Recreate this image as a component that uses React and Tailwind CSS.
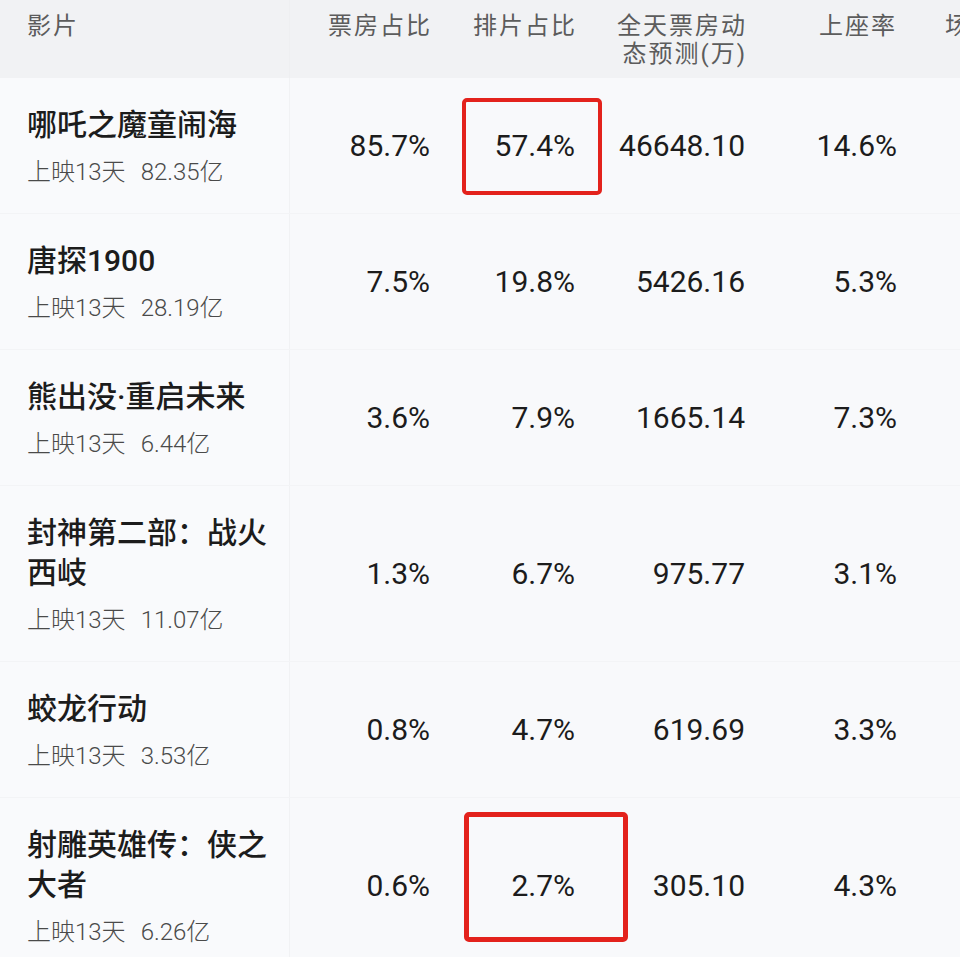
import React from 'react';

const films = [
    { name: '哪吒之魔童闹海', days: '上映13天', total: '82.35亿', box: '85.7%', show: '57.4%', pred: '46648.10', seat: '14.6%' },
    { name: '唐探1900', days: '上映13天', total: '28.19亿', box: '7.5%', show: '19.8%', pred: '5426.16', seat: '5.3%' },
    { name: '熊出没·重启未来', days: '上映13天', total: '6.44亿', box: '3.6%', show: '7.9%', pred: '1665.14', seat: '7.3%' },
    { name: '封神第二部：战火西岐', days: '上映13天', total: '11.07亿', box: '1.3%', show: '6.7%', pred: '975.77', seat: '3.1%' },
    { name: '蛟龙行动', days: '上映13天', total: '3.53亿', box: '0.8%', show: '4.7%', pred: '619.69', seat: '3.3%' },
    { name: '射雕英雄传：侠之大者', days: '上映13天', total: '6.26亿', box: '0.6%', show: '2.7%', pred: '305.10', seat: '4.3%' },
];

const grid = 'grid grid-cols-[290px_150px_145px_170px_150px_1fr]';

export default function App() {
    return (
        <div
            className="relative w-[960px] h-[957px] overflow-hidden bg-[#f8f9fb]"
            style={{ fontFamily: 'Roboto, "Noto Sans CJK SC", sans-serif' }}
        >
            {/* header */}
            <div className={`${grid} h-[78px] bg-[#f1f2f4] text-[24px] leading-[28px] tracking-[2px] text-[#5c5c5c]`}>
                <div className="pl-[27px] pt-[12px] border-r border-[#eeeff1]">影片</div>
                <div className="pr-[8px] pt-[12px] text-right">票房占比</div>
                <div className="pr-[8px] pt-[12px] text-right">排片占比</div>
                <div className="pr-[8px] pt-[12px] text-right">全天票房动<br />态预测(万)</div>
                <div className="pr-[8px] pt-[12px] text-right">上座率</div>
                <div className="pl-[40px] pt-[12px] whitespace-nowrap">场均</div>
            </div>

            {films.map((f) => (
                <div key={f.name} className={`${grid} border-b border-[#f3f4f6] text-[#1c1c1c]`}>
                    <div className="pl-[27px] pr-[13px] pt-[27px] pb-[24px] border-r border-[#f1f2f4] bg-[#f9fafc]">
                        <div className="text-[30px] leading-[40px] font-medium">{f.name}</div>
                        <div className="mt-[10px] text-[24px] leading-[34px] font-light text-[#4a4a4a]">
                            {f.days}
                            <span className="ml-[15px]">{f.total}</span>
                        </div>
                    </div>
                    <div className="flex items-center justify-end pr-[10px] text-[30px]">{f.box}</div>
                    <div className="flex items-center justify-end pr-[10px] text-[30px]">{f.show}</div>
                    <div className="flex items-center justify-end pr-[10px] text-[30px]">{f.pred}</div>
                    <div className="flex items-center justify-end pr-[8px] text-[30px]">{f.seat}</div>
                    <div />
                </div>
            ))}

            {/* red annotation boxes */}
            <div className="absolute left-[462px] top-[98px] w-[140px] h-[97px] border-[4px] border-[#e3221c] rounded-[5px]" />
            <div className="absolute left-[464px] top-[812px] w-[164px] h-[130px] border-[5px] border-[#e3221c] rounded-[5px]" />
        </div>
    );
}
